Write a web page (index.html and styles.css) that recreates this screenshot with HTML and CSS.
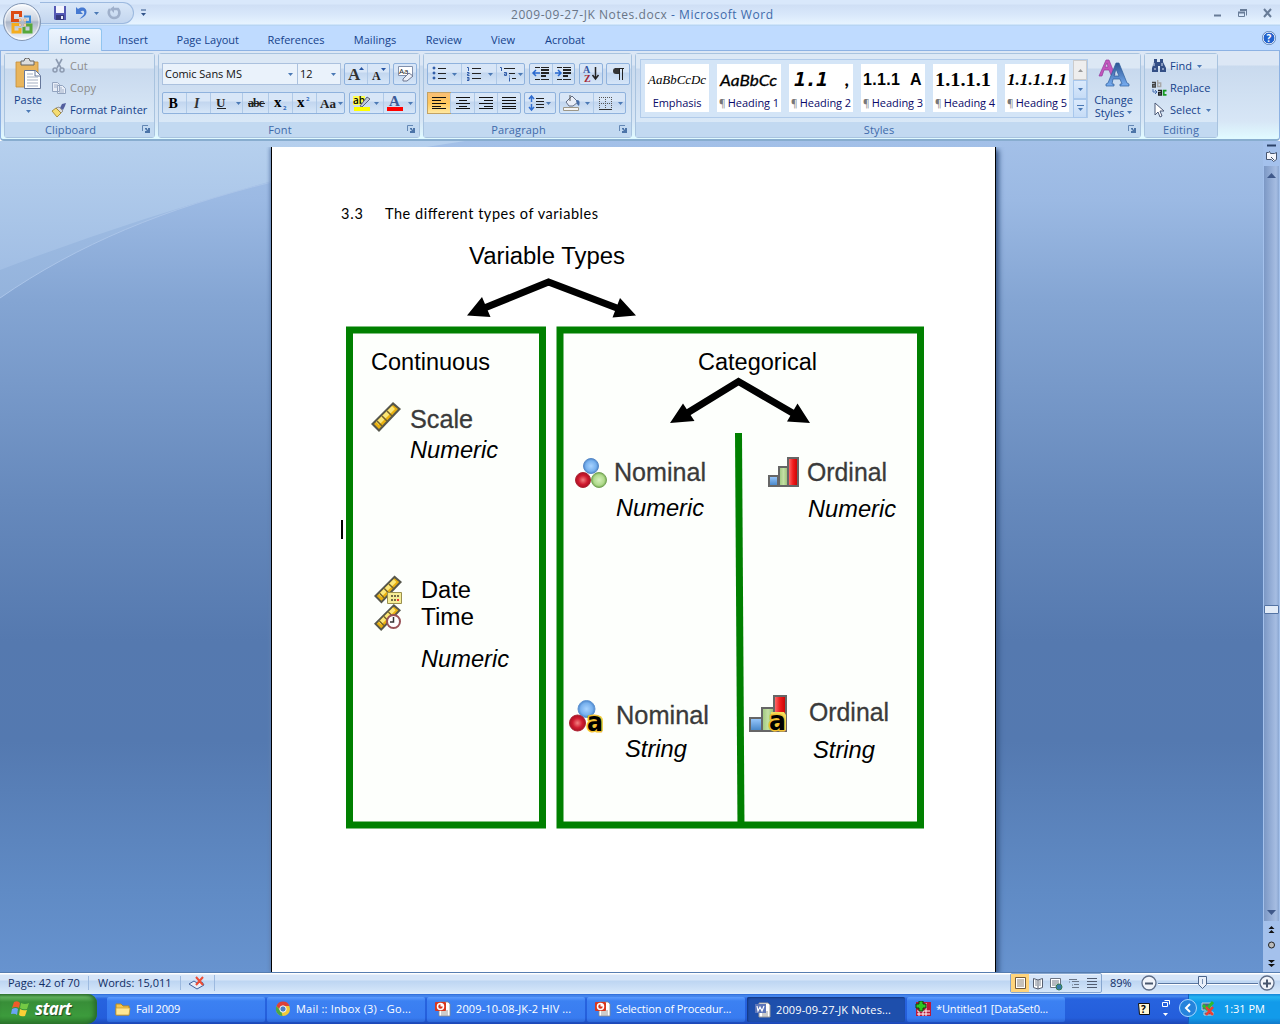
FILE: index.html
```html
<!DOCTYPE html>
<html lang="en">
<head>
<meta charset="utf-8">
<title>2009-09-27-JK Notes.docx - Microsoft Word</title>
<link rel="stylesheet" href="styles.css">
</head>
<body>
<svg class="defs" width="0" height="0">
  <defs>
    <symbol id="down" viewBox="0 0 5 3"><path d="M0 0h5L2.500 3z" fill="#4b79b5"/></symbol>
    <symbol id="launch" viewBox="0 0 8 8"><path d="M.5 6V.5H6" fill="none" stroke="#6387b4"/><path d="M3 3h2v1l1 1V3h2v5H3V6h2L3 4z" fill="#4c74a8"/></symbol>
    <linearGradient id="blueA" x2="0" y2="1"><stop stop-color="#2c5594"/><stop offset="1" stop-color="#78aef2"/></linearGradient>
    <linearGradient id="redBar"><stop stop-color="#ff7777"/><stop offset=".5" stop-color="#f01c1c"/><stop offset="1" stop-color="#c40000"/></linearGradient>
    <linearGradient id="greenBar"><stop stop-color="#9cc67c"/><stop offset=".5" stop-color="#c4e0a4"/><stop offset="1" stop-color="#94bd71"/></linearGradient>
    <linearGradient id="blueBar" x2="0" y2="1"><stop stop-color="#9ccbff"/><stop offset="1" stop-color="#4283c6"/></linearGradient>
    <radialGradient id="ballBlue"><stop stop-color="#a8d3ff"/><stop offset=".7" stop-color="#78b1ee"/><stop offset="1" stop-color="#4b86cb"/></radialGradient>
    <radialGradient id="ballRed"><stop stop-color="#f28080"/><stop offset=".6" stop-color="#d01c30"/><stop offset="1" stop-color="#aa1023"/></radialGradient>
    <radialGradient id="ballGreen"><stop stop-color="#d6f0bc"/><stop offset=".7" stop-color="#b0da8c"/><stop offset="1" stop-color="#74ad50"/></radialGradient>
    <symbol id="ruler" viewBox="0 0 30 30"><path d="M0 22 22 0l8 7L8 30z" fill="#56574c"/><path d="M3 22 22 3l5 4L8 27z" fill="#e9b010"/><path d="m5 20 16-16 3 3L8 23z" fill="#fbe779"/><path d="m6 19 5 5m0-10 5 5m0-10 5 5" stroke="#74602a" stroke-width="1.500"/></symbol>
    <symbol id="ppt" viewBox="0 0 16 16"><path d="M6 1h7l2 2v12H4V1z" fill="#fff" stroke="#888" stroke-width=".8"/><path d="M6 10h7M6 12h7M6 14h7" stroke="#999"/><rect y="1" width="11" height="9" rx="1" fill="#d9361d"/><circle cx="5.500" cy="5.500" r="3" fill="none" stroke="#fff" stroke-width="1.500"/><path d="M5.500 5.500V2.500a3 3 0 0 1 3 3z" fill="#fff"/></symbol>
  </defs>
</svg>

<header class="titlebar">
  <div class="qat">
    <svg width="86" height="21" viewBox="48 3 86 21">
      <path d="M54 6h12v14H55l-1-1z" fill="#5459b4"/><path d="M56 6h8v7h-8z" fill="#f3f4fd"/><path d="M56 15h8v5h-8z" fill="#363a7e"/><path d="M61 16h2v3h-2z" fill="#e8eaf8"/>
      <path d="M76 7v7h7l-2.500-2.500c3-2 5 0 3 3.500l-4 4c7-2 9-8 5-11-3-1-5 0-6.500 1z" fill="#4679d1"/>
      <use href="#down" x="94" y="12" width="5" height="3"/>
      <path d="M110 9c-3 4 0 9 4 9 5 0 7-5 4-9h-4" fill="none" stroke="#9fb0cb" stroke-width="2.500"/><path d="M114 6v7l-4-4z" fill="#9fb0cb"/>
    </svg>
  </div>
  <svg class="qat-more" width="8" height="8" viewBox="0 0 8 8"><path d="M2 1h5" stroke="#31548a"/><path d="M2 4h5L4.500 7z" fill="#31548a"/></svg>
  <div class="caption"><span>2009-09-27-JK Notes.docx</span> - Microsoft Word</div>
  <svg class="winbtns" width="66" height="16" viewBox="1210 5 66 16"><path d="M1214 15.500h7" stroke="#687c98" stroke-width="2"/><path d="M1240.500 10.500h6v5m-8-3v4h6v-4z" fill="none" stroke="#687c98"/><path d="M1240 10h7M1238 12.500h7" stroke="#687c98" stroke-width="2"/><path d="m1264 9 7 8m0-8-7 8" stroke="#687c98" stroke-width="2"/></svg>
</header>

<svg class="office" width="42" height="42" viewBox="0 0 42 42">
  <defs><linearGradient id="orb" x2="0" y2="1"><stop stop-color="#fafcff"/><stop offset=".45" stop-color="#cbd3df"/><stop offset=".5" stop-color="#aab5c7"/><stop offset="1" stop-color="#f7faff"/></linearGradient></defs>
  <circle cx="20" cy="20" r="18.500" fill="url(#orb)" stroke="#8397b4"/><circle cx="20" cy="20" r="17" fill="none" stroke="#fff" stroke-opacity=".7"/>
  <g fill="none" stroke-width="3"><path d="M17 18.500h-6.500v-8h8V15" stroke="#dc4a12"/><path d="M22 14.500h6V20h-4" stroke="#3b8ad8" stroke-width="2"/><path d="M17 22.500h-6V30h7v-4" stroke="#f5ad1d"/><path d="M22 25v5h7v-7h-5" stroke="#57a83a"/></g>
  <path d="M17 17h2v2h-2zm5 0h2v2h-2zm-5 5h2v2h-2zm5 0h2v2h-2z" fill="#fff" stroke="#da8b35" stroke-width=".5"/>
</svg>

<nav class="tabs">
  <span class="tab active">Home</span><span class="tab">Insert</span><span class="tab">Page Layout</span><span class="tab">References</span><span class="tab">Mailings</span><span class="tab">Review</span><span class="tab">View</span><span class="tab">Acrobat</span>
  <svg class="help" width="14" height="14" viewBox="0 0 14 14"><circle cx="7" cy="7" r="6" fill="#2362cd" stroke="#fff"/><circle cx="7" cy="7" r="6.700" fill="none" stroke="#456ba2" stroke-width=".7"/><text x="7" y="10.500" text-anchor="middle" font-family="Open Sans" font-size="10" font-weight="700" fill="#fff">?</text></svg>
</nav>

<section class="ribbon">
  <div class="group clipboard">
    <div class="body">
      <div class="big">
        <svg width="28" height="32" viewBox="15 57 28 32"><path d="M17 61h22v25H17z" fill="#e9b55c" stroke="#c38d39" stroke-width=".8"/><path d="M22 60h3a3 3 0 0 1 6 0h4v4H22z" fill="#ddd" stroke="#656565"/><path d="M25.500 69.500h11l5 5v13h-16z" fill="#fff" stroke="#66789b"/><path d="M36 70v5h5" fill="none" stroke="#66789b"/><path d="M28 73h6m-6 3h11m-11 3h11m-11 3h11m-11 3h11" stroke="#a4afc2"/></svg>
        <span>Paste</span>
        <svg width="5" height="3"><use href="#down" width="5" height="3"/></svg>
      </div>
      <div class="cmds">
        <div class="cmd off"><svg width="16" height="16"><path d="m5 1 5 9m1-9-5 9" stroke="#8d9bb1" stroke-width="1.600"/><circle cx="4" cy="12" r="2" fill="none" stroke="#8d9bb1" stroke-width="1.500"/><circle cx="11" cy="12" r="2" fill="none" stroke="#8d9bb1" stroke-width="1.500"/></svg>Cut</div>
        <div class="cmd off"><svg width="16" height="16"><path d="M1.500 2.500h5l2 2v7h-7zM6.500 5.500h5l3 3v5h-8z" fill="#e7edf7" stroke="#93a4bf"/><path d="M3 5h4M3 7h4m1 1h3m-3 2h5m-5 2h5" stroke="#a3b1c9"/></svg>Copy</div>
        <div class="cmd"><svg width="16" height="16"><path d="m15 1-4 1-2 4 3 2 2-4z" fill="#525e9e"/><path d="m8 5 4 4-2 2-5-5z" fill="#ddd" stroke="#777" stroke-width=".7"/><path d="m5 6 5 5-4 4-5-6z" fill="#f4dc72" stroke="#9c7f29" stroke-width=".8"/></svg>Format Painter</div>
      </div>
    </div>
    <footer>Clipboard<svg width="8" height="8"><use href="#launch" width="8" height="8"/></svg></footer>
  </div>

  <div class="group font">
    <div class="body rows">
      <div class="row">
        <div class="combo family">Comic Sans MS<svg width="5" height="3"><use href="#down" width="5" height="3"/></svg></div>
        <div class="combo size">12<svg width="5" height="3"><use href="#down" width="5" height="3"/></svg></div>
        <div class="btns gap3">
          <svg width="22" height="20"><text x="3" y="16" font-family="Liberation Serif" font-size="17" font-weight="700" fill="#333">A</text><path d="M14 6h5l-2.500-3z" fill="#2755a3"/></svg>
          <svg width="22" height="20"><text x="4" y="16" font-family="Liberation Serif" font-size="12" font-weight="700" fill="#222">A</text><path d="M13 4h5l-2.500 3z" fill="#2755a3"/></svg>
        </div>
        <div class="btns gap3"><svg width="22" height="20"><path d="M4.500 2.500h14v9h-14z" fill="#fff" stroke="#8291ac"/><text x="5" y="9.500" font-family="Open Sans" font-size="8" fill="#222">Aa</text><path d="m9 15 6-6 4 3-6 5H9z" fill="#edf0f8" stroke="#6d7790"/></svg></div>
      </div>
      <div class="row">
        <div class="btns">
          <svg width="23" height="20"><text x="5.500" y="15" font-family="Liberation Serif" font-size="14" font-weight="700">B</text></svg>
          <svg width="24" height="20"><text x="7" y="15" font-family="Liberation Serif" font-size="14" font-style="italic" font-weight="700" fill="#333">I</text></svg>
          <svg width="32" height="20"><text x="5" y="14" font-family="Liberation Serif" font-size="13" font-weight="700" fill="#222">U</text><path d="M6 15.500h9" stroke="#222"/><use href="#down" x="25" y="9" width="5" height="3"/></svg>
          <svg width="26" height="20"><text x="5" y="14" font-family="Liberation Serif" font-size="12" font-weight="700" textLength="16" fill="#222">abc</text><path d="M5 10.500h17" stroke="#222"/></svg>
          <svg width="24" height="20"><text x="5" y="14" font-family="Liberation Serif" font-size="15" font-weight="700">x</text><text x="14" y="17" font-family="Open Sans" font-size="6" font-weight="700" fill="#2e69bc">2</text></svg>
          <svg width="24" height="20"><text x="4" y="14" font-family="Liberation Serif" font-size="15" font-weight="700">x</text><text x="13" y="8" font-family="Open Sans" font-size="6" font-weight="700" fill="#2e69bc">2</text></svg>
          <svg width="28" height="20"><text x="3" y="15" font-family="Liberation Serif" font-size="13" font-weight="700" fill="#222">Aa</text><use href="#down" x="21" y="9" width="5" height="3"/></svg>
        </div>
        <div class="btns gap4">
          <svg width="33" height="20"><path d="M3 3h12v9H3z" fill="#ffff4f"/><text x="3" y="11" font-family="Open Sans" font-size="10" font-weight="600">ab</text><path d="m10 13 7-9 3 2-8 8z" fill="#c0c8d8" stroke="#59627e"/><path d="M4 14h16v4H4z" fill="#ff0"/><use href="#down" x="24" y="9" width="5" height="3"/></svg>
          <svg width="32" height="20"><text x="5" y="13" font-family="Liberation Serif" font-size="15" font-weight="700" fill="#3b5b98">A</text><path d="M3 14h16v4H3z" fill="red"/><use href="#down" x="24" y="9" width="5" height="3"/></svg>
        </div>
      </div>
    </div>
    <footer>Font<svg width="8" height="8"><use href="#launch" width="8" height="8"/></svg></footer>
  </div>

  <div class="group paragraph">
    <div class="body rows">
      <div class="row">
        <div class="btns">
          <svg width="33" height="20"><path d="M5 3h2v2H5zm0 5h2v2H5zm0 5h2v2H5z" fill="#335eaa" stroke="#335eaa" stroke-width=".6"/><path d="M10 4.500h8m-8 5h8m-8 5h8" stroke="#222"/><use href="#down" x="24" y="9" width="5" height="3"/></svg>
          <svg width="35" height="20"><path d="M5 3.500h1.500V7M5 8.500h2v1.500H5.500v1.500H7.500M5 13.500h2v3H5m0-1.500h2" fill="none" stroke="#335eaa"/><path d="M10 4.500h9m-9 5h9m-9 5h9" stroke="#222"/><use href="#down" x="26" y="9" width="5" height="3"/></svg>
          <svg width="28" height="20"><path d="M3 3.500h1.500V7M7 8.500h2.500v3H7.500v-1.500h2M12.500 11.500v1m0 1v4" fill="none" stroke="#335eaa"/><path d="M7 4.500h11m-6 5h6m-3 5h4" stroke="#222"/><use href="#down" x="21" y="9" width="5" height="3"/></svg>
        </div>
        <div class="btns gap4">
          <svg width="22" height="20"><path d="M5 3.500h14M5 15.500h14" stroke="#222" stroke-dasharray="5 1 8"/><path d="M11 6h8m-8 3h8m-8 3h5" stroke="#222" stroke-width="2"/><path d="M3 9h7M6 6 3 9l3 3" fill="none" stroke="#2868cf" stroke-width="1.500"/></svg>
          <svg width="22" height="20"><path d="M4 3.500h14M4 15.500h14" stroke="#222" stroke-dasharray="5 1 8"/><path d="M10 6h8m-8 3h8m-8 3h5" stroke="#222" stroke-width="2"/><path d="M2 9h6M5 6l3 3-3 3" fill="none" stroke="#2868cf" stroke-width="1.500"/></svg>
        </div>
        <div class="btns gap4"><svg width="22" height="20"><text x="3" y="9" font-family="Liberation Serif" font-size="10" font-weight="700" fill="#3455a0">A</text><text x="4" y="18" font-family="Liberation Serif" font-size="10" font-weight="700" fill="#a42836">Z</text><path d="M15.500 3v12m-3-4 3 4 3-4" stroke="#222" stroke-width="1.500" fill="none"/></svg></div>
        <div class="btns gap3"><svg width="22" height="20"><path d="M12.500 4v12m3-12v12M8 4.500h9" stroke="#222"/><path d="M12 4H9a3 3 0 0 0 0 6h3z" fill="#333"/></svg></div>
      </div>
      <div class="row">
        <div class="btns">
          <svg class="pressed" width="22" height="20"><path d="M4 4.500h14M4 7.500h9m-9 3h14M4 13.500h9m-9 2h14" stroke="#111"/></svg>
          <svg width="24" height="20"><path d="M5 4.500h14M8 7.500h8m-11 3h14M8 13.500h8m-11 2h14" stroke="#111"/></svg>
          <svg width="23" height="20"><path d="M4 4.500h14M9 7.500h9m-14 3h14M9 13.500h9m-14 2h14" stroke="#111"/></svg>
          <svg width="23" height="20"><path d="M4 4.500h14M4 7.500h14m-14 3h14M4 13.500h14m-14 2h14" stroke="#111"/></svg>
        </div>
        <div class="btns gap3"><svg width="30" height="20"><path d="M6.500 3v6M4 6l2.500-3L9 6m-2.500 5v6M4 14l2.500 3L9 14" fill="none" stroke="#326ed0" stroke-width="1.500"/><path d="M11 5.500h8m-8 3h8m-8 3h8m-8 3h8" stroke="#222"/><use href="#down" x="21" y="9" width="5" height="3"/></svg></div>
        <div class="btns gap3">
          <svg width="33" height="20"><path d="m6 9 6-6 6 6-5 4H9z" fill="#e9eef8" stroke="#656f86"/><path d="M10 2v6" stroke="#555"/><path d="M17 7c3 0 3 3 2 6-2-1-2-3-3-5z" fill="#456ca8"/><path d="M3.500 14.500h15v3h-15z" fill="#f4f4f4" stroke="#9d9788"/><use href="#down" x="25" y="9" width="5" height="3"/></svg>
          <svg width="32" height="20"><path d="M5 4.500h13M5 10.500h13M5.500 4v13M11.500 4v13M17.500 4v13" fill="none" stroke="#555" stroke-dasharray="1 1"/><path d="M5 16.500h13" stroke="#333"/><use href="#down" x="24" y="9" width="5" height="3"/></svg>
        </div>
      </div>
    </div>
    <footer>Paragraph<svg width="8" height="8"><use href="#launch" width="8" height="8"/></svg></footer>
  </div>

  <div class="group styles">
    <div class="body">
      <div class="gallery">
        <div class="style"><svg width="64" height="28"><text x="3" y="20" textLength="58" lengthAdjust="spacingAndGlyphs" font-family="Liberation Serif" font-style="italic" font-size="13">AaBbCcDc</text></svg><span>Emphasis</span></div>
        <div class="style"><svg width="64" height="28"><text x="3" y="22" textLength="57" lengthAdjust="spacingAndGlyphs" font-family="Lato" font-style="italic" font-size="16" stroke="#000" stroke-width=".3">AaBbCc</text></svg><span><i>¶</i> Heading 1</span></div>
        <div class="style"><svg width="64" height="28"><text x="5" y="22" font-family="DejaVu Sans Mono" font-style="italic" font-weight="700" font-size="20" textLength="34">1.1</text><text x="56" y="22" font-family="Lato" font-style="italic" font-weight="700" font-size="19">,</text></svg><span><i>¶</i> Heading 2</span></div>
        <div class="style"><svg width="64" height="28"><text x="2" y="21" font-family="Liberation Sans" font-weight="700" font-size="16" textLength="37">1.1.1</text><text x="49" y="21" font-family="Liberation Sans" font-weight="700" font-size="16">A</text></svg><span><i>¶</i> Heading 3</span></div>
        <div class="style"><svg width="64" height="28"><text x="2" y="22" font-family="Liberation Serif" font-weight="700" font-size="18" textLength="56" lengthAdjust="spacingAndGlyphs">1.1.1.1</text></svg><span><i>¶</i> Heading 4</span></div>
        <div class="style"><svg width="64" height="28"><text x="2" y="21" font-family="Liberation Serif" font-weight="700" font-style="italic" font-size="17" textLength="60" lengthAdjust="spacingAndGlyphs">1.1.1.1.1</text></svg><span><i>¶</i> Heading 5</span></div>
        <div class="steps"><div class="dim"><svg width="5" height="3"><path d="M0 3h5L2.500 0z" fill="#999"/></svg></div><div><svg width="5" height="3"><use href="#down" width="5" height="3"/></svg></div><div><svg width="7" height="7"><path d="M0 .5h7" stroke="#4b79b5"/><path d="M1 3h5L3.500 6z" fill="#4b79b5"/></svg></div></div>
      </div>
      <div class="big change">
        <svg width="32" height="30"><path d="m1 18 7-16h3l6 15h-4l-2-5H6l-2 6zm6-9h3L9 5z" fill="#c455bd" stroke="#923d9c" stroke-width=".7"/><path d="M8 28v-2l2-1 8-20h3l8 20 2 1v2h-9v-2h2l-2-5h-7l-1 5h2v2zm8-10h5l-3-7z" fill="url(#blueA)" stroke="#2d5d9b" stroke-width=".7"/></svg>
        <span>Change</span><span>Styles <svg width="5" height="3"><use href="#down" width="5" height="3"/></svg></span>
      </div>
    </div>
    <footer>Styles<svg width="8" height="8"><use href="#launch" width="8" height="8"/></svg></footer>
  </div>

  <div class="group editing">
    <div class="body">
      <div class="cmds">
        <div class="cmd"><svg width="16" height="16"><path d="M3 1h3v3h3V1h3v3l3 6v4H9V8H7v6H1v-4l2-6z" fill="#344f86"/><path d="M3 5v3m8-3v3M3 11h2m6 0h2" stroke="#d8e3f6"/></svg>Find<svg class="dd" width="5" height="3"><use href="#down" width="5" height="3"/></svg></div>
        <div class="cmd"><svg width="16" height="16"><g fill="none" stroke-width="1.400"><path d="M1 2.500h3.300V7H1.700V4.700h2.600" stroke="#444"/><path d="M6.700 0v6.500h3V3H7" stroke="#a8a8a8"/><path d="M7 10.500h3.300V15H7.700v-2.300h2.600" stroke="#222"/><path d="M15.500 10.700h-2.800V14.800h2.800" stroke="#159a20" stroke-width="1.800"/></g><path d="M2 9v3h4M4 10l2 2-2 2" fill="none" stroke="#456cae"/></svg>Replace</div>
        <div class="cmd"><svg width="16" height="16"><path d="M4 1v12l3-3 2 5 2-1-2-5h4z" fill="#fff" stroke="#4b5977"/></svg>Select<svg class="dd" width="5" height="3"><use href="#down" width="5" height="3"/></svg></div>
      </div>
    </div>
    <footer>Editing</footer>
  </div>
</section>

<main class="workspace">
  <svg class="swoosh" width="470" height="164" viewBox="0 141 470 164"><defs><linearGradient id="sky" x2="0" y2="1"><stop stop-color="#b6d0ee"/><stop offset="1" stop-color="#a1bee4"/></linearGradient><linearGradient id="band" x2="0" y2="1"><stop stop-color="#a5c2e8"/><stop offset="1" stop-color="#94b3dc"/></linearGradient></defs><path d="M0 141h460Q360 158 272 182C166 208 78 244 0 298z" fill="url(#band)"/><path d="M0 141h465Q370 154 272 181Q130 220 0 270z" fill="url(#sky)"/><path d="M0 298C78 244 166 208 272 182" fill="none" stroke="#abc5e9"/></svg>
  <div class="page">
    <svg width="723" height="825" viewBox="272 147 723 825">
      <g font-family="Lato" font-size="14.500"><text x="341" y="219" textLength="22">3.3</text><text x="385" y="219" textLength="213">The different types of variables</text></g>
      <path d="M342 520v19" stroke="#000" stroke-width="2"/>
      <rect x="349.500" y="330" width="193" height="495" fill="#fdfffc" stroke="#008000" stroke-width="7"/>
      <rect x="560" y="330" width="360.500" height="495" fill="#fdfffc" stroke="#008000" stroke-width="7"/>
      <path d="M738.500 433 741 828" stroke="#008000" stroke-width="7"/>
      <g fill="none" stroke="#000" stroke-width="7"><path d="m482 309 66.500-27 71 27"/><path d="m684 415 54.500-33.500L796 415"/></g>
      <path d="m467 315.500 15-18.500 8.500 20zM636 315.500 620 298l-7.500 19.500zM670 423l13-19.500 11.500 17.500zM810 423l-23-1.500 10.500-18z"/>
      <g font-family="Liberation Sans" font-size="23.500">
        <text x="469" y="264" textLength="156" lengthAdjust="spacingAndGlyphs">Variable Types</text>
        <text x="371" y="370" textLength="119" lengthAdjust="spacingAndGlyphs">Continuous</text>
        <text x="698" y="370" textLength="119" lengthAdjust="spacingAndGlyphs">Categorical</text>
        <text x="421" y="598" textLength="50" lengthAdjust="spacingAndGlyphs">Date</text>
        <text x="421" y="625" textLength="53" lengthAdjust="spacingAndGlyphs">Time</text>
        <g font-style="italic">
          <text x="410" y="458" textLength="88" lengthAdjust="spacingAndGlyphs">Numeric</text>
          <text x="421" y="667" textLength="88" lengthAdjust="spacingAndGlyphs">Numeric</text>
          <text x="616" y="516" textLength="88" lengthAdjust="spacingAndGlyphs">Numeric</text>
          <text x="808" y="517" textLength="88" lengthAdjust="spacingAndGlyphs">Numeric</text>
          <text x="625" y="757" textLength="62" lengthAdjust="spacingAndGlyphs">String</text>
          <text x="813" y="758" textLength="62" lengthAdjust="spacingAndGlyphs">String</text>
        </g>
      </g>
      <g font-family="Liberation Sans" font-size="26" fill="#3a3a3a" stroke="#3a3a3a" stroke-width=".3">
        <text x="410" y="428" textLength="63" lengthAdjust="spacingAndGlyphs">Scale</text>
        <text x="614" y="481" textLength="92" lengthAdjust="spacingAndGlyphs">Nominal</text>
        <text x="807" y="481" textLength="80" lengthAdjust="spacingAndGlyphs">Ordinal</text>
        <text x="616" y="724" textLength="93" lengthAdjust="spacingAndGlyphs">Nominal</text>
        <text x="809" y="721" textLength="80" lengthAdjust="spacingAndGlyphs">Ordinal</text>
      </g>
      <use href="#ruler" x="371" y="402" width="30" height="30"/>
      <use href="#ruler" x="374" y="575" width="28" height="29"/>
      <path d="M387.500 592.500h14v11h-14z" fill="#f6ed96" stroke="#9a904f"/><path d="M391 596h8m-8 4h8" stroke="#746c45" stroke-width="2" stroke-dasharray="2 1"/><path d="M397 599h2v2h-2z" fill="#e33"/>
      <use href="#ruler" x="374" y="604" width="27" height="27"/>
      <circle cx="393.500" cy="621.500" r="6.500" fill="#fff" stroke="#985257" stroke-width="2"/><path d="M393.500 617v5H390" fill="none" stroke="#333" stroke-width="1.500"/>
      <g stroke-width="1"><circle cx="591" cy="466" r="7.500" fill="url(#ballBlue)" stroke="#5989c7"/><circle cx="583" cy="480" r="7.500" fill="url(#ballRed)" stroke="#ad2634"/><circle cx="599" cy="480" r="7.500" fill="url(#ballGreen)" stroke="#78a35b"/>
      <circle cx="586.500" cy="709" r="8.500" fill="url(#ballBlue)" stroke="#6195d3"/><circle cx="577.500" cy="723" r="8" fill="url(#ballRed)" stroke="#ad2634"/></g>
      <g stroke="#666" stroke-width="2"><path d="M769 476h9v10h-9z" fill="url(#blueBar)"/><path d="M779 467h9v19h-9z" fill="url(#greenBar)"/><path d="M788 458h10v28h-10z" fill="url(#redBar)"/><path d="M750 718h12v13h-12z" fill="url(#blueBar)"/><path d="M762 708h12v23h-12z" fill="url(#greenBar)"/><path d="M774 696h12v35h-12z" fill="url(#redBar)"/></g>
      <path d="M589 716h12l2 3v12h-14zM771 712h13l2 3v15h-15z" fill="#f3dd5c"/>
      <g font-family="DejaVu Sans" font-size="26" font-weight="700" stroke="#f3c233" stroke-width="3" paint-order="stroke" stroke-linejoin="round"><text x="587" y="731" textLength="16" lengthAdjust="spacingAndGlyphs">a</text><text x="769" y="730" textLength="17" lengthAdjust="spacingAndGlyphs">a</text></g>
    </svg>
  </div>
  <div class="scroll">
    <svg width="17" height="25" viewBox="0 0 17 25"><path d="M4 4.500h9" stroke="#2c4268" stroke-width="2"/><path d="M3.500 11.500h2l1-1 1 2h4l2-1v7l-3 2-2-2h-5z" fill="#f3f5fb" stroke="#45546e"/><path d="m8 16 3 3" stroke="#45546e"/></svg>
    <div class="track"><svg width="9" height="5"><path d="M0 5h9L4.500 0z" fill="#3f598a"/></svg><i class="thumb"></i><svg width="9" height="5"><path d="M0 0h9L4.500 5z" fill="#3f598a"/></svg></div>
    <svg width="17" height="51" viewBox="0 0 17 51"><path d="m5.500 8 3-3 3 3zm0 4 3-3 3 3zM5 39h7l-3.500 3zm0 4h7l-3.500 3z" fill="#111"/><circle cx="8.500" cy="24" r="3" fill="#bbb" stroke="#222"/></svg>
  </div>
</main>

<div class="status">
  <span class="s-page">Page: 42 of 70</span><span class="s-words">Words: 15,011</span>
  <span class="s-proof"><svg width="18" height="16"><path d="m1 9 5-3 3 2 5-1 2 3-7 4z" fill="#e8eef8" stroke="#44639b"/><path d="m8 2 7 8m0-8-7 8" stroke="#ee4c34" stroke-width="2"/></svg></span>
  <div class="views">
    <svg class="on" width="18" height="18"><path d="M4.500 3.500h10v11h-10z" fill="#fff" stroke="#735a39"/><path d="M6 6h7M6 8h7m-7 2h7m-7 2h7" stroke="#8b8172"/></svg>
    <svg width="18" height="18"><path d="M4.500 4.500 9 6l4.500-1.500v9L9 15l-4.500-1.500zM9 6v9" fill="#fff" stroke="#565f70"/><path d="M6 7h2m2 0h2M6 9h2m2 0h2M6 11h2m2 0h2" stroke="#7c8592"/></svg>
    <svg width="18" height="18"><path d="M3.500 4.500h10v9h-10z" fill="#fff" stroke="#6c7482"/><path d="M5 7h7M5 9h7m-7 2h4" stroke="#6c7482"/><circle cx="12" cy="13" r="3" fill="#377aaa" stroke="#377d50"/></svg>
    <svg width="18" height="18"><path d="M4 5.500h8m-5 2h7m-5 3h5M7 13.500h7M4 8h1m2 3h1" stroke="#697689"/></svg>
    <svg width="18" height="18"><path d="M4 4.500h10m-10 3h10m-10 3h10m-10 3h10" stroke="#515c70"/></svg>
  </div>
  <span class="pct">89%</span>
  <svg class="zoom" width="140" height="20" viewBox="1140 973 140 20"><g fill="#f1f4fa" stroke="#5d6c87" stroke-width="1.300"><circle cx="1149" cy="983" r="7"/><circle cx="1267" cy="983" r="7"/></g><path d="M1145 983.500h8m110 0h8m-4-4v8" stroke="#49566d" stroke-width="2"/><path d="M1158 983.500h100" stroke="#5976a1"/><path d="M1158 984.500h100" stroke="#fff"/><path d="M1198.500 976.500h8v8l-4 4-4-4z" fill="#e9eff9" stroke="#4c658b"/><path d="M1202.500 979v5" stroke="#7790b3"/></svg>
</div>

<footer class="taskbar">
  <div class="start"><svg width="19" height="18" viewBox="0 0 19 18"><path d="M3 2q4-2 6 1L8 8Q5 6 1 8z" fill="#ef5b2a"/><path d="M10 3q4 2 8 0l-2 6q-4 1-7-1z" fill="#74c945"/><path d="M1 9q4-2 6 0l-1 6Q4 13 0 14z" fill="#6aa5f5"/><path d="M9 9q3 2 7 1l-2 6q-4 1-6-1z" fill="#fcd036"/></svg>start</div>
  <div class="tasks">
    <div class="task"><svg width="16" height="16"><path d="M1 3h5l2 2h6v9H1z" fill="#f4c64e" stroke="#b58a24"/><path d="M1 7h14l-1 7H1z" fill="#ffe793" stroke="#c6992d" stroke-width=".7"/></svg>Fall 2009</div>
    <div class="task mail"><svg width="16" height="16"><circle cx="8" cy="8" r="7" fill="#f2ca37"/><path d="M1.500 5A7 7 0 0 1 14.500 5H8l-2 5z" fill="#dc4138"/><path d="m1.500 5 5 6 1 4A7 7 0 0 1 1.500 5z" fill="#49a749"/><circle cx="8" cy="8" r="3.200" fill="#4c7fc5" stroke="#fff"/></svg>Mail :: Inbox (3) - Go...</div>
    <div class="task wide"><svg width="16" height="16"><use href="#ppt" width="16" height="16"/></svg>2009-10-08-JK-2 HIV ...</div>
    <div class="task"><svg width="16" height="16"><use href="#ppt" width="16" height="16"/></svg>Selection of Procedur...</div>
    <div class="task current wide"><svg width="16" height="16"><path d="M6 1h7l2 2v12H4V1z" fill="#fff" stroke="#999"/><path d="M7 10h6m-6 2h6m-6 2h6" stroke="#999"/><rect y="2" width="11" height="9" fill="#5d76b9"/><path d="m2 4 1 5 2-4 2 4 2-5" stroke="#fff" fill="none" stroke-width="1.200"/></svg>2009-09-27-JK Notes...</div>
    <div class="task"><svg width="16" height="16"><path d="M1 1h15v14H1z" fill="#bb1738"/><path d="M2 10h13M2 13h13M11 2v13m-3-5v5m-4-5v5" stroke="#fff"/><path d="M4 0h4v3h3v4H8v3H4V7H1V3h3z" fill="#2bc722" stroke="#113d0c"/></svg>*Untitled1 [DataSet0...</div>
  </div>
  <svg class="lang" width="34" height="22" viewBox="1137 998 34 22"><path d="M1138.500 1003.500h11v11h-10z" fill="#fff8d4" stroke="#111"/><text x="1141" y="1013" font-family="Open Sans" font-size="10" font-weight="700">?</text><path d="M1164.500 1000.500h5v4m-7-2h5v4h-5z" fill="none" stroke="#fff"/><path d="M1163 1013h5l-2.500 3z" fill="#fff"/></svg>
  <div class="tray"><svg width="38" height="24" viewBox="1178 998 38 24"><circle cx="1187" cy="1009" r="8.500" fill="#2583dc" stroke="#a6d7ff"/><path d="m1189 1005-4 4 4 4" fill="none" stroke="#fff" stroke-width="2"/><path d="M1201 1004h9v7h-9zm2 9h9v3h-9z" fill="#4c6585" stroke="#c1d1d8"/><path d="m1202 1006 4 4 6-7" fill="none" stroke="#2bbc2c" stroke-width="3"/><path d="m1205 1008 7 8m0-8-7 8" stroke="#ee3d33" stroke-width="2.500"/></svg><span>1:31 PM</span></div>
</footer>
</body>
</html>
```
FILE: styles.css
```css
* { box-sizing: border-box; }
body { margin: 0; width: 1280px; height: 1024px; display: flex; flex-direction: column; position: relative; overflow: hidden; font: 11px/14px "Open Sans", "Noto Sans", sans-serif; color: #15428b; white-space: nowrap; }
svg { display: block; flex: none; }
.defs { position: absolute; }

.titlebar { height: 26px; flex: none; display: flex; align-items: center; padding-left: 40px; background: linear-gradient(#d9e8fb 0 4px, #cfdff5 5px, #d9e8fb 15px, #e7f4ff 24px, #b7d5f4 25px); }
.qat { width: 94px; height: 22px; padding-left: 8px; border: 1px solid #9cb9df; border-left: 0; border-radius: 0 11px 11px 0; background: linear-gradient(#d9e7f8, #c3d6ef); }
.qat-more { margin-left: 5px; }
.caption { margin-left: 364px; padding-top: 3px; font-size: 12px; line-height: 18px; letter-spacing: .56px; color: #3e6aaa; }
.caption span { color: #697586; }
.winbtns { margin-left: auto; margin-right: 4px; }
.office { position: absolute; left: 2px; top: 2px; z-index: 2; }

.tabs { height: 25px; flex: none; display: grid; grid-template-columns: 58px 58px 91.5px 85px 73px 64.5px 54px 70px 1fr; padding-left: 46px; background: #bfdbff; border-bottom: 1px solid #8db2e3; }
.tab { text-align: center; padding-top: 7px; }
.tab.active { margin: 2px 2px -1px; padding-top: 4px; border: 1px solid #91c5f0; border-bottom: 0; border-radius: 3px 3px 0 0; background: linear-gradient(#edf5fe, #dce8f6); }
.help { justify-self: end; margin: 5px 4px 0 0; }

.ribbon { height: 90px; flex: none; display: flex; gap: 3px; padding: 2px 0 0 3px; border: 1px solid #8db2e3; border-top: 0; border-radius: 0 0 4px 4px; border-bottom: 2px solid #88adcf; background: linear-gradient(#dce7f5 0 14px, #c9daee 15px, #d7e6f6 70px, #e0faff 87px); }
.group { height: 85px; border: 1px solid #a8c3df; border-radius: 3px; display: flex; flex-direction: column; box-shadow: inset 1px 1px 0 #e5eef9; }
.group .body { height: 68px; display: flex; background: linear-gradient(#dce8f5 0 14px, #c8d9ee 15px, #d9e8f7); }
.group footer { height: 15px; display: flex; align-items: center; justify-content: center; position: relative; background: #c2d9f1; color: #3e6aaa; padding-top: 1px; letter-spacing: .15px; }
.group footer svg { position: absolute; right: 4px; top: 3px; }
.clipboard { width: 151px; }
.font { width: 262px; }
.paragraph { width: 209px; }
.styles { width: 506px; }
.editing { width: 74px; }
.clipboard footer, .font footer, .paragraph footer, .styles footer { padding-right: 18px; }
.big { width: 46px; display: flex; flex-direction: column; align-items: center; padding-top: 4px; }
.big > span { line-height: 13px; padding-top: 3px; }
.big > svg + span + svg { margin-top: 4px; }
.cmds { display: flex; flex-direction: column; padding-top: 1px; }
.cmd { height: 22px; display: flex; align-items: center; gap: 3px; letter-spacing: .05px; }
.off { color: #8d8d8d; }
.editing .cmds { padding-left: 6px; }
.dd { margin-left: 2px; }

.body.rows { flex-direction: column; gap: 7px; padding: 9px 0 0 3px; }
.row { display: flex; height: 22px; }
.btns { height: 22px; display: flex; border: 1px solid #8fb2dd; border-radius: 2px; background: linear-gradient(#d8e6f7 0 8px, #c2d6ef 9px, #d6e6f8); }
.btns svg + svg { border-left: 1px solid #afc9e7; }
.gap3 { margin-left: 3px; }
.gap4 { margin-left: 4px; }
.pressed { background: linear-gradient(#f9bf75, #ffc85c 50%, #ffe8a0); outline: 1px solid #c2a264; }
.combo { height: 22px; display: flex; align-items: center; justify-content: space-between; padding: 0 4px 0 2px; border: 1px solid #abc1de; background: #eaf2fb; color: #111; }
.family { width: 136px; letter-spacing: -.05px; }
.size { width: 43px; border-left: 0; }

.gallery { margin: 5px 0 0 4px; width: 448px; height: 59px; flex: none; display: flex; gap: 8px; padding: 4px 0 0 4px; border: 1px solid #b1cbea; background: #d4e5f7; }
.style { width: 64px; height: 48px; background: #fff; color: #0a0a68; text-align: center; }
.style span { display: block; margin-top: 3px; letter-spacing: -.05px; line-height: 16px; }
.style span { margin-top: 3px; }
.style i { font-style: normal; font-size: 10px; color: #777; letter-spacing: -.5px; }
.steps { margin: -4px 0 0 -4px; width: 15px; height: 58px; display: grid; grid-template-rows: 20px 19px 19px; }
.steps div { display: grid; place-items: center; border: 1px solid #a8c7ec; background: linear-gradient(#dbeafc, #c6dcf6); }
.steps .dim { background: #eee; border-color: #ccc; }
.change { margin-left: 1px; width: 49px; }
.change > svg { margin-left: 0; }
.change > span { padding-top: 5px; line-height: 13px; }
.change > span + span { padding-top: 0; display: flex; gap: 3px; align-items: center; }

.workspace { height: 831px; flex: none; position: relative; display: flex; justify-content: space-between; padding: 6px 0 0 271px; background: linear-gradient(#a3c0e8 0, #9bb9e3 60px, #84a5d3 160px, #6689bc 360px, #5579af 500px, #5479b0 600px, #608bc5 750px, #6793cf 831px); }
.swoosh { position: absolute; left: 0; top: 0; }
.page { position: relative; width: 725px; height: 825px; background: #fff; border: solid #000; border-width: 0 1px; box-shadow: 3px 3px 5px #3a5888, -1px 0 4px #6786b3; clip-path: inset(0 -10px 0 -5px); }
.scroll { position: relative; width: 17px; margin-top: -6px; background: #a4c1ec; }
.track { height: 755px; margin: 0 1px; display: flex; flex-direction: column; justify-content: space-between; align-items: center; padding: 7px 0 6px; background: linear-gradient(90deg, #7c98c5, #a6bde2 80%, #8ba8d3); }
.thumb { width: 15px; height: 9px; margin-top: 131px; border: 1px solid #5373a4; border-radius: 1px; background: #e2ebf7; }

.status { height: 22px; flex: none; display: flex; align-items: center; padding-bottom: 1px; color: #102c63; background: linear-gradient(#fff 0 1px, #d6e5f8 2px 7px, #bdd5f2 8px, #d7e8fa 20px, #e2efff); border-top: 1px solid #567db0; }
.s-page { width: 89px; padding-left: 8px; border-right: 1px solid #9cb9df; }
.s-words { width: 92px; padding-left: 9px; border-right: 1px solid #9cb9df; letter-spacing: .03px; }
.s-proof { width: 34px; padding-left: 7px; border-right: 1px solid #9cb9df; }
.views { margin-left: 795px; display: flex; border: 1px solid #86a6cf; border-radius: 2px; }
.views .on { background: #ffd47b; }
.pct { width: 38px; padding-left: 8px; }
.zoom { margin-left: auto; }

.taskbar { height: 30px; flex: none; display: flex; background: linear-gradient(#2b68d6 0, #4a8cf0 2px, #2763df 5px, #245edb 24px, #1c47b5); color: #fff; }
.start { width: 97px; height: 30px; display: flex; align-items: center; gap: 5px; padding: 0 0 1px 11px; border-radius: 0 9px 10px 0; background: linear-gradient(#347a34, #62b35f 3px, #388e38 8px, #3c9b3c 22px, #2c792c); font: italic bold 17px "Open Sans", sans-serif; letter-spacing: -.6px; text-shadow: 1px 1px 1px #234c23; box-shadow: inset -3px 0 4px #286b2b; }
.tasks { display: flex; gap: 2px; padding: 3px 0 2px 10px; }
.task { width: 158px; height: 25px; display: flex; align-items: center; gap: 5px; padding: 0 0 1px 8px; border-radius: 2px; background: linear-gradient(#5b9bff, #3c81f2 4px, #387bf0 21px, #2c67d6); letter-spacing: -.13px; }
.wide { letter-spacing: .12px; }
.mail { letter-spacing: .2px; }
.current { padding-bottom: 0; background: #1e4fac; box-shadow: inset 1px 1px 2px #13357e; }
.lang { margin: 4px 0 0 72px; }
.tray { width: 92px; display: flex; align-items: center; justify-content: space-between; padding-right: 15px; margin-left: 17px; background: linear-gradient(#1485d8, #25b4f2 3px, #129bea 8px, #129bea 24px, #1179ca); border-left: 1px solid #1160bd; }
.tray svg { margin-left: -10px; }
```
